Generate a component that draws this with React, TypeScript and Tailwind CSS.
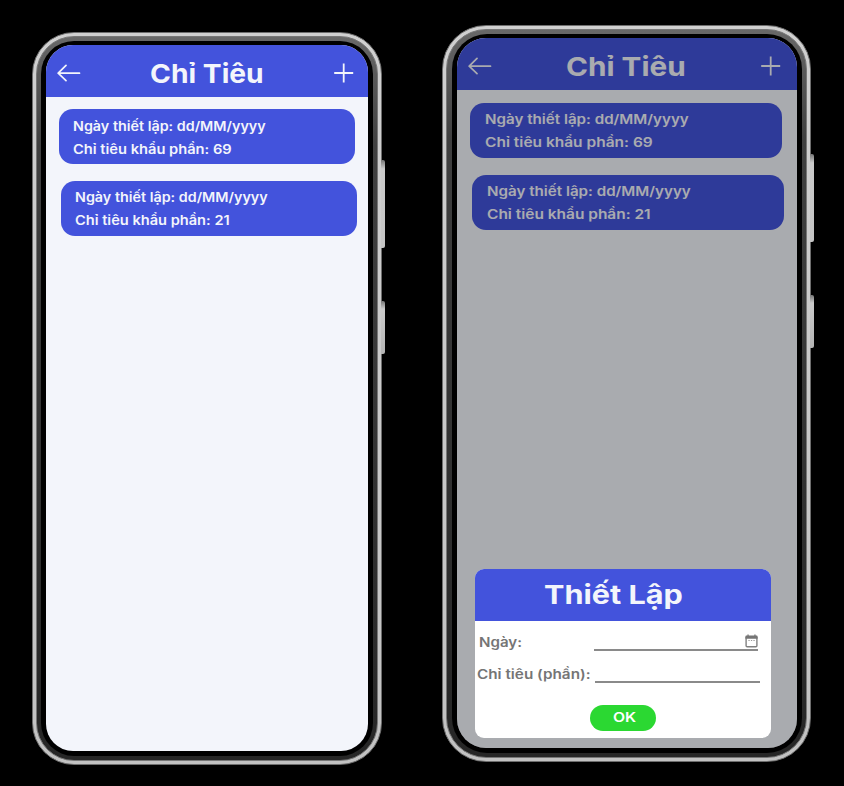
import { useLayoutEffect, useRef, useState } from "react";
import type { ReactNode } from "react";

/* One line of text, stretched horizontally to a given width. */
function FitText({ width, className = "", children }: { width: number; className?: string; children: ReactNode }) {
  const ref = useRef<HTMLSpanElement>(null);
  const [scale, setScale] = useState(1);
  useLayoutEffect(() => {
    if (ref.current) setScale(width / ref.current.offsetWidth);
  }, [width]);
  return (
    <div style={{ width }} className={`shrink-0 whitespace-nowrap ${className}`}>
      <span ref={ref} style={{ transform: `scaleX(${scale})` }} className="inline-block origin-left">
        {children}
      </span>
    </div>
  );
}

function BackIcon() {
  return (
    <svg viewBox="0 0 24 18" className="h-[18px] w-6" fill="none" stroke="#f3f5fb" strokeWidth="1.7" strokeLinecap="round" strokeLinejoin="round">
      <path d="M22.5 9.2H1.2M9 1.4L1.2 9.2l7.8 7.4" />
    </svg>
  );
}

function PlusIcon() {
  return (
    <svg viewBox="0 0 20 20" className="size-5" fill="none" stroke="#f3f5fb" strokeWidth="1.8">
      <path d="M9.7 .5v19M.2 10h19" />
    </svg>
  );
}

function CalendarIcon() {
  return (
    <svg viewBox="0 0 13 14" className="h-3.5 w-[13px]">
      <path d="M1.1 3v8.7q0 1 1 1h8.8q1 0 1-1V3" fill="none" stroke="#808080" strokeWidth="1.4" />
      <path d="M.4 4.8V2.6q0-1 1-1h1V.4h1.3v1.2h5.6V.4h1.3v1.2h1q1 0 1 1v2.2z" fill="#757575" />
      <path d="M3.4 6.5h1.3M5.9 6.5h1.3M8.4 6.5h1.3" stroke="#9a9a9a" strokeWidth="1.2" />
    </svg>
  );
}

function Keys({ className }: { className: string }) {
  return (
    <div className={`absolute flex w-1 flex-col gap-[53px] ${className}`}>
      <div className="h-[88px] rounded-r-[2px] bg-linear-to-b from-[#777] via-[#cacaca] via-10% to-[#c4c4c4]" />
      <div className="h-[53px] rounded-r-[2px] bg-linear-to-b from-[#777] via-[#cacaca] via-15% to-[#b4b4b4]" />
    </div>
  );
}

function Card({ className, w1, w2, value }: { className: string; w1: number; w2: number; value: number }) {
  return (
    <div className={`h-[55px] rounded-[14px] bg-[#4353dc] pt-[5px] text-[13px] leading-[23px] font-semibold ${className}`}>
      <FitText width={w1}>Ngày thiết lập: dd/MM/yyyy</FitText>
      <FitText width={w2}>Chỉ tiêu khẩu phần: {value}</FitText>
    </div>
  );
}

export default function App() {
  return (
    <main className="flex h-[786px] w-[844px] overflow-hidden bg-black font-['Inter','Noto_Sans',sans-serif] text-[#f3f5fb]">
      <section className="relative mt-8 ml-8 h-[733px] w-[350px] rounded-[42px] border border-[#6e6e6e] bg-linear-to-b from-[#d0d0d0] to-[#c2c2c2] p-[3px]">
        <Keys className="top-[127px] -right-1" />
        <div className="h-full rounded-[38px] border border-[#777] bg-linear-to-b from-[#686868] via-[#404040] via-15% to-[#262626] p-1">
          <div className="h-full rounded-[33px] bg-black px-[5px] pt-1 pb-[5px]">
            <div className="h-full overflow-hidden rounded-[27px] bg-[#f3f5fb]">
              <header className="flex h-[52px] items-center bg-[#4353dc] pt-1 pl-[11px]">
                <BackIcon />
                <FitText width={114} className="mt-px ml-[69px] text-[26px] leading-8 font-bold">Chỉ Tiêu</FitText>
                <div className="ml-[70px]"><PlusIcon /></div>
              </header>
              <Card className="mt-3 ml-[13px] w-[296px] pl-[14px] pt-1.5!" w1={193} w2={159} value={69} />
              <Card className="mt-[17px] ml-[15px] w-[296px] pl-[14px]" w1={193} w2={155} value={21} />
            </div>
          </div>
        </div>
      </section>

      <section className="relative mt-[25px] ml-[60px] h-[737px] w-[369px] rounded-[44px] border border-[#6e6e6e] bg-linear-to-b from-[#d0d0d0] to-[#c2c2c2] p-[3px]">
        <Keys className="top-32 -right-1" />
        <div className="h-full rounded-[40px] border border-[#777] bg-linear-to-b from-[#686868] via-[#404040] via-15% to-[#262626] py-1 pr-1 pl-[5px]">
          <div className="h-full rounded-[35px] bg-black px-[5px] pt-1 pb-[5px]">
            <div className="relative h-full overflow-hidden rounded-[29px] bg-[#f3f5fb]">
              <header className="flex h-[52px] items-center bg-[#4353dc] pt-1 pl-[11px]">
                <BackIcon />
                <FitText width={120} className="mt-px ml-[74px] text-[26px] leading-8 font-bold">Chỉ Tiêu</FitText>
                <div className="ml-[75px]"><PlusIcon /></div>
              </header>
              <Card className="mt-[13px] ml-[13px] w-[312px] pl-[15px]" w1={204} w2={168} value={69} />
              <Card className="mt-[17px] ml-[15px] w-[312px] pl-[15px]" w1={204} w2={164} value={21} />

              <div className="absolute inset-0 bg-black/30" />
              <div className="absolute bottom-2.5 left-[18px] h-[169px] w-[296px] overflow-hidden rounded-[9px] bg-white text-[13px] font-semibold text-[#757575]">
                <div className="flex h-[52px] justify-center bg-[#4353dc] pt-2.5 text-[#f3f5fb]">
                  <FitText width={139} className="mr-5 text-[26px] leading-8 font-bold">Thiết Lập</FitText>
                </div>
                <div className="mt-[11px] flex h-5 items-start pl-1">
                  <FitText width={43} className="leading-5">Ngày:</FitText>
                  <div className="ml-[72px] flex h-[19px] w-[164px] items-start justify-end border-b-2 border-[#8a8a8a] pt-0.5">
                    <CalendarIcon />
                  </div>
                </div>
                <div className="mt-3 flex h-5 items-start pl-0.5">
                  <FitText width={114} className="leading-5">Chỉ tiêu (phần):</FitText>
                  <div className="ml-1 h-[19px] w-[165px] border-b-2 border-[#8a8a8a]" />
                </div>
                <button className="mt-[21px] ml-[115px] flex h-[26px] w-[66px] items-center justify-center rounded-full bg-[#2bd832] text-white">
                  <FitText width={23}>OK</FitText>
                </button>
              </div>
            </div>
          </div>
        </div>
      </section>
    </main>
  );
}
